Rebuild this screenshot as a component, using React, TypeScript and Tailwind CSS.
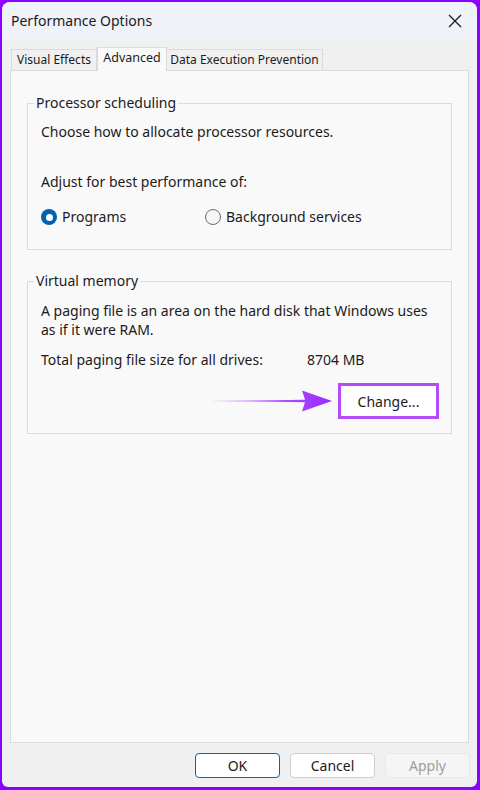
import React from "react";

const font = { fontFamily: '"Noto Sans", "Liberation Sans", sans-serif' };

function Radio({ checked }: { checked?: boolean }) {
  return checked ? (
    <span className="w-[16px] h-[16px] rounded-full bg-[#0063b1] flex items-center justify-center shrink-0">
      <span className="w-[7px] h-[7px] rounded-full bg-white" />
    </span>
  ) : (
    <span className="w-[16px] h-[16px] rounded-full border border-[#6b6b6b] bg-[#f6f6f6] shrink-0" />
  );
}

export default function App() {
  return (
    <div className="w-[480px] h-[790px] bg-[#8c00ff] pt-[2px] pl-[2px] pr-[3px] pb-[3px]" style={font}>
      <div className="w-full h-full rounded-t-[8px] rounded-b-[6px] bg-[#f0f0f0] flex flex-col overflow-hidden text-[#1b1b1b]">
        {/* Title bar */}
        <div className="h-[38px] shrink-0 bg-[#eff2f9] flex items-center justify-between pl-[9px] pr-[14px]">
          <span className="text-[14px] text-[#1a1a1a] mt-[-1px]">Performance Options</span>
          <svg width="14" height="14" viewBox="0 0 14 14" className="mr-[1px]">
            <path d="M1 1 L13 13 M13 1 L1 13" stroke="#1a1a1a" strokeWidth="1.3" />
          </svg>
        </div>

        {/* Tabs */}
        <div className="flex items-end pl-[9px] pt-[7px] h-[30px] shrink-0 text-[12px]">
          <div className="h-[21px] w-[86px] border border-b-0 border-[#dadada] bg-[#f0f0f0] flex items-center justify-center">Visual Effects</div>
          <div className="h-[24px] w-[70px] border border-b-0 border-[#dadada] bg-[#f9f9f9] flex items-start justify-center pt-[1px] relative z-10 mb-[-1px] text-[12.5px]">Advanced</div>
          <div className="h-[21px] w-[156px] border border-b-0 border-l-0 border-[#dadada] bg-[#f0f0f0] flex items-center justify-center">Data Execution Prevention</div>
        </div>

        {/* Panel */}
        <div className="mx-[8px] border border-[#dcdcdc] bg-[#f9f9f9] h-[673px] shrink-0 px-[16px] pt-[22px] flex flex-col text-[14px]">
          <fieldset className="border border-[#dcdcdc] h-[157px] pl-[13px] pr-[6px]">
            <legend className="ml-[-7px] px-[2px] leading-[20px]">Processor scheduling</legend>
            <div className="mt-[9px] leading-[20px]">Choose how to allocate processor resources.</div>
            <div className="mt-[30px] leading-[20px]">Adjust for best performance of:</div>
            <div className="mt-[15px] flex items-center leading-[20px]">
              <div className="flex items-center gap-[5px] w-[164px]">
                <Radio checked />
                <span>Programs</span>
              </div>
              <div className="flex items-center gap-[5px]">
                <Radio />
                <span>Background services</span>
              </div>
            </div>
          </fieldset>

          <fieldset className="mt-[21px] border border-[#dcdcdc] h-[163px] pl-[13px] pr-[6px]">
            <legend className="ml-[-7px] px-[2px] leading-[20px]">Virtual memory</legend>
            <div className="mt-[10px] leading-[19px] whitespace-nowrap">
              A paging file is an area on the hard disk that Windows uses
              <br />
              as if it were RAM.
            </div>
            <div className="mt-[11px] flex leading-[20px]">
              <span className="w-[266px]">Total paging file size for all drives:</span>
              <span>8704 MB</span>
            </div>
            <div className="mt-[13px] flex items-center justify-end pr-[6px]">
              <svg width="124" height="24" viewBox="0 0 124 24" className="mr-[5px]">
                <defs>
                  <linearGradient id="ag" x1="0" y1="0" x2="1" y2="0">
                    <stop offset="0" stopColor="#c57cff" />
                    <stop offset="1" stopColor="#9b2cff" />
                  </linearGradient>
                </defs>
                <path d="M0 12 L96 10.8 L93 1.5 L123 12 L93 22.5 L96 13.2 Z" fill="url(#ag)" />
              </svg>
              <div className="w-[101px] h-[36px] border-[3px] border-[#b54cf7] bg-white flex items-center justify-center">
                Change...
              </div>
            </div>
          </fieldset>
        </div>

        {/* Buttons */}
        <div className="flex justify-end gap-[10px] pr-[7px] pt-[10px] text-[14px]">
          <div className="w-[85px] h-[25px] rounded-[4px] border border-[#0067c0] bg-white flex items-center justify-center">OK</div>
          <div className="w-[85px] h-[25px] rounded-[4px] border border-[#cfcfcf] bg-white flex items-center justify-center">Cancel</div>
          <div className="w-[85px] h-[25px] rounded-[4px] border border-[#e6e6e6] bg-[#f5f5f5] text-[#9d9d9d] flex items-center justify-center">Apply</div>
        </div>
      </div>
    </div>
  );
}
